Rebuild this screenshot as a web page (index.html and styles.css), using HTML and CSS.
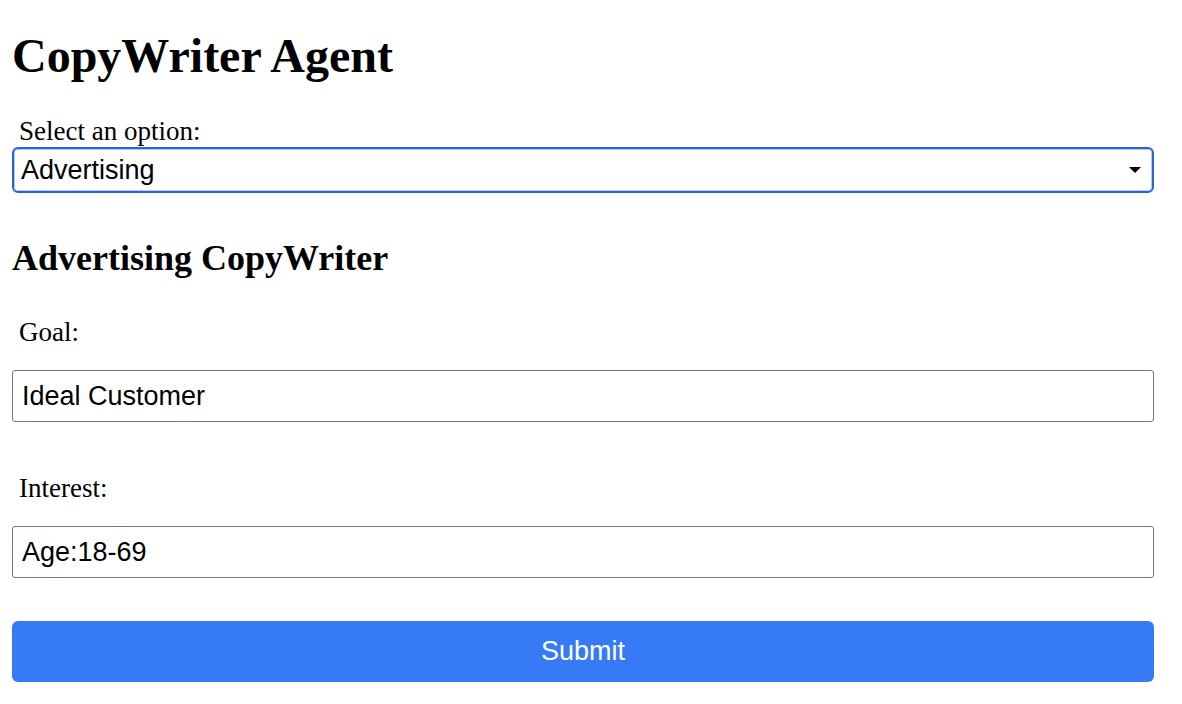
FILE: index.html
```html
<!DOCTYPE html>
<html lang="en">
<head>
<meta charset="utf-8">
<title>CopyWriter Agent</title>
<link rel="stylesheet" href="styles.css">
</head>
<body>
<div class="app">
  <h1 class="title">CopyWriter Agent</h1>
  <label class="label label-select" for="opt">Select an option:</label>
  <div class="select-wrap">
    <select id="opt" class="select">
      <option>Advertising</option>
    </select>
  </div>
  <h2 class="subtitle">Advertising CopyWriter</h2>
  <label class="label label-goal" for="goal">Goal:</label>
  <input id="goal" class="field" type="text" value="Ideal Customer">
  <label class="label label-interest" for="interest">Interest:</label>
  <input id="interest" class="field" type="text" value="Age:18-69">
  <button class="submit" type="button">Submit</button>
</div>
</body>
</html>
```

FILE: styles.css
```css
html, body {
  margin: 0;
  padding: 0;
  background: #ffffff;
}

body {
  padding-left: 12px;
  font-family: "Liberation Serif", "Times New Roman", serif;
  color: #000000;
}

.app {
  width: 1142px;
  display: flex;
  flex-direction: column;
}

.title {
  margin: 29px 0 0;
  font-size: 48px;
  line-height: 54px;
  font-weight: bold;
}

.label {
  display: block;
  padding-left: 7px;
  font-size: 27px;
  line-height: 30px;
}

.label-select { margin-top: 33px; }
.label-goal { margin-top: 39px; }
.label-interest { margin-top: 51px; }

.select-wrap {
  position: relative;
  margin-top: 1px;
  height: 46px;
}

.select-wrap::after {
  content: "";
  position: absolute;
  right: 13px;
  top: 20px;
  width: 0;
  height: 0;
  border-left: 6px solid transparent;
  border-right: 6px solid transparent;
  border-top: 6px solid #000000;
  pointer-events: none;
}

.select {
  -webkit-appearance: none;
  appearance: none;
  box-sizing: border-box;
  width: 100%;
  height: 46px;
  margin: 0;
  padding: 0 30px 0 7px;
  border: 2px solid #2e63d0;
  box-shadow: inset 0 0 0 1px rgba(46, 99, 208, 0.35);
  border-radius: 6px;
  background: #ffffff;
  font-family: "Liberation Sans", Arial, sans-serif;
  font-size: 27px;
  color: #000000;
  outline: none;
}

.subtitle {
  margin: 45px 0 0;
  font-size: 36px;
  line-height: 40px;
  font-weight: bold;
}

.field {
  box-sizing: border-box;
  width: 100%;
  height: 52px;
  margin: 23px 0 0;
  padding: 0 9px;
  border: 1px solid #767676;
  border-radius: 3px;
  background: #ffffff;
  font-family: "Liberation Sans", Arial, sans-serif;
  font-size: 27px;
  color: #000000;
  outline: none;
}

.submit {
  box-sizing: border-box;
  width: 100%;
  height: 61px;
  margin: 43px 0 0;
  padding: 0;
  border: none;
  border-radius: 6px;
  background: #367bf5;
  color: #ffffff;
  font-family: "Liberation Sans", Arial, sans-serif;
  font-size: 27px;
  cursor: pointer;
}
```
